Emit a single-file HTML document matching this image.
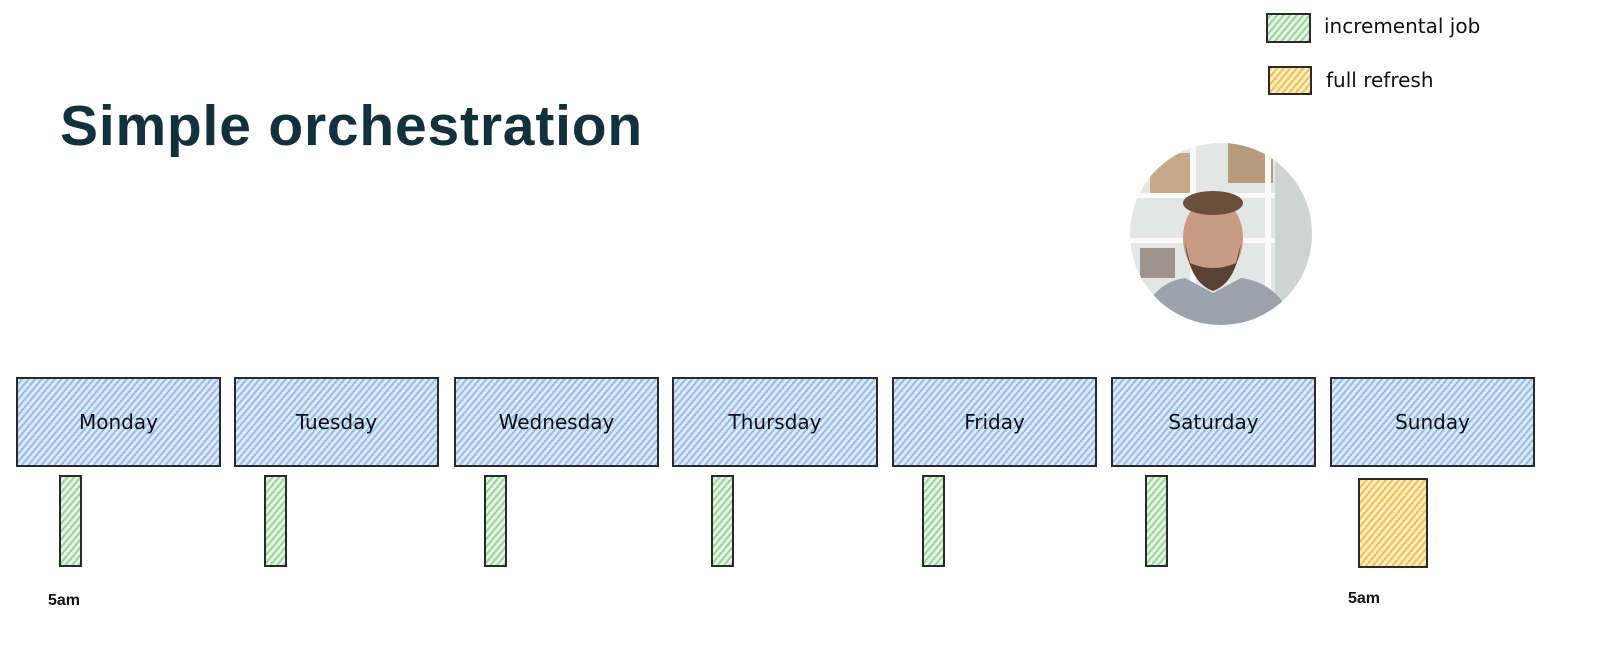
<!DOCTYPE html>
<html><head><style>
html,body{margin:0;padding:0;background:#fff;width:1609px;height:664px;overflow:hidden;position:relative;font-family:"Liberation Sans",sans-serif}
.t{position:absolute;left:60px;top:93px;font-size:57px;font-weight:bold;color:#13303d;letter-spacing:0.8px}
.b{position:absolute;box-sizing:border-box;border:2px solid #2a2a2a;background:repeating-linear-gradient(-50deg,#98bde9 0 2px,#dde9f8 2px 5px);display:flex;align-items:center;justify-content:center;font-family:"Comic Sans MS","DejaVu Sans",sans-serif;font-size:20px;color:#111}
.g{position:absolute;box-sizing:border-box;border:2px solid #2a2a2a;background:repeating-linear-gradient(-50deg,#9cd39f 0 2px,#e3f4e3 2px 5px)}
.o{position:absolute;box-sizing:border-box;border:2px solid #2a2a2a;background:repeating-linear-gradient(-50deg,#f3c24e 0 2px,#fbedc6 2px 5px)}
.l{position:absolute;font-size:16px;font-weight:bold;color:#111}
.lg{position:absolute;font-family:"Comic Sans MS","DejaVu Sans",sans-serif;font-size:20px;color:#111}
</style></head><body>
<div class="t">Simple orchestration</div>
<div class="g" style="left:1266px;top:13px;width:45px;height:30px"></div>
<div class="lg" style="left:1324px;top:14px">incremental job</div>
<div class="o" style="left:1268px;top:66px;width:44px;height:29px"></div>
<div class="lg" style="left:1326px;top:68px">full refresh</div>

<svg style="position:absolute;left:1130px;top:143px" width="182" height="182" viewBox="0 0 182 182">
<defs><clipPath id="c"><circle cx="91" cy="91" r="91"/></clipPath></defs>
<g clip-path="url(#c)">
<rect width="182" height="182" fill="#e3e6e4"/>
<rect x="20" y="10" width="45" height="40" fill="#c7a98a"/>
<rect x="98" y="0" width="45" height="40" fill="#b89a7c"/>
<rect x="60" y="0" width="6" height="182" fill="#fafafa"/>
<rect x="135" y="0" width="6" height="182" fill="#fafafa"/>
<rect x="0" y="50" width="182" height="5" fill="#fafafa"/>
<rect x="0" y="95" width="182" height="5" fill="#fafafa"/>
<rect x="145" y="0" width="37" height="182" fill="#cfd3d1"/>
<rect x="10" y="105" width="35" height="30" fill="#9d948b"/>
<ellipse cx="83" cy="95" rx="30" ry="40" fill="#c99a84"/>
<ellipse cx="83" cy="60" rx="30" ry="12" fill="#6b4f3d"/>
<path d="M55 100 Q60 140 83 148 Q106 140 111 100 L106 120 Q83 130 60 120Z" fill="#5a4232"/>
<path d="M10 182 Q20 140 55 135 L83 150 L111 135 Q150 140 165 182Z" fill="#9aa3ab"/>
</g></svg>

<div class="b" style="left:16px;top:377px;width:205px;height:90px">Monday</div>
<div class="b" style="left:234px;top:377px;width:205px;height:90px">Tuesday</div>
<div class="b" style="left:454px;top:377px;width:205px;height:90px">Wednesday</div>
<div class="b" style="left:672px;top:377px;width:206px;height:90px">Thursday</div>
<div class="b" style="left:892px;top:377px;width:205px;height:90px">Friday</div>
<div class="b" style="left:1111px;top:377px;width:205px;height:90px">Saturday</div>
<div class="b" style="left:1330px;top:377px;width:205px;height:90px">Sunday</div>

<div class="g" style="left:59px;top:475px;width:23px;height:92px"></div>
<div class="g" style="left:264px;top:475px;width:23px;height:92px"></div>
<div class="g" style="left:484px;top:475px;width:23px;height:92px"></div>
<div class="g" style="left:711px;top:475px;width:23px;height:92px"></div>
<div class="g" style="left:922px;top:475px;width:23px;height:92px"></div>
<div class="g" style="left:1145px;top:475px;width:23px;height:92px"></div>
<div class="o" style="left:1358px;top:478px;width:70px;height:90px"></div>

<div class="l" style="left:48px;top:592px">5am</div>
<div class="l" style="left:1348px;top:590px">5am</div>
</body></html>
